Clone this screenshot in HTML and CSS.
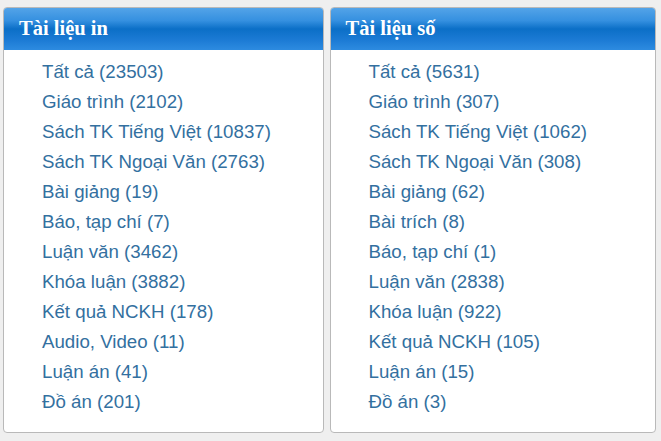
FILE: index.html
```html
<!DOCTYPE html>
<html>
<head>
<meta charset="utf-8">
<link rel="stylesheet" href="styles.css">
</head>
<body>
<div class="wrap">
  <div class="panel left">
    <div class="head">Tài liệu in</div>
    <ul class="list">
      <li><a href="#">Tất cả (23503)</a></li>
      <li><a href="#">Giáo trình (2102)</a></li>
      <li><a href="#">Sách TK Tiếng Việt (10837)</a></li>
      <li><a href="#">Sách TK Ngoại Văn (2763)</a></li>
      <li><a href="#">Bài giảng (19)</a></li>
      <li><a href="#">Báo, tạp chí (7)</a></li>
      <li><a href="#">Luận văn (3462)</a></li>
      <li><a href="#">Khóa luận (3882)</a></li>
      <li><a href="#">Kết quả NCKH (178)</a></li>
      <li><a href="#">Audio, Video (11)</a></li>
      <li><a href="#">Luận án (41)</a></li>
      <li><a href="#">Đồ án (201)</a></li>
    </ul>
  </div>
  <div class="panel right">
    <div class="head">Tài liệu số</div>
    <ul class="list">
      <li><a href="#">Tất cả (5631)</a></li>
      <li><a href="#">Giáo trình (307)</a></li>
      <li><a href="#">Sách TK Tiếng Việt (1062)</a></li>
      <li><a href="#">Sách TK Ngoại Văn (308)</a></li>
      <li><a href="#">Bài giảng (62)</a></li>
      <li><a href="#">Bài trích (8)</a></li>
      <li><a href="#">Báo, tạp chí (1)</a></li>
      <li><a href="#">Luận văn (2838)</a></li>
      <li><a href="#">Khóa luận (922)</a></li>
      <li><a href="#">Kết quả NCKH (105)</a></li>
      <li><a href="#">Luận án (15)</a></li>
      <li><a href="#">Đồ án (3)</a></li>
    </ul>
  </div>
</div>
</body>
</html>
```
FILE: styles.css
```css
html, body {
  margin: 0;
  padding: 0;
  background: #efefef;
}
.wrap {
  display: flex;
  gap: 6px;
  padding: 7px 5px 0 3px;
}
.panel {
  background: #fff;
  border: 1px solid #b9b9b9;
  border-radius: 4px;
  height: 424px;
  overflow: hidden;
  box-sizing: content-box;
}
.left { width: 319px; }
.right { width: 325px; }
.head {
  height: 42px;
  line-height: 40px;
  padding-left: 15px;
  font-family: "Liberation Serif", serif;
  font-weight: bold;
  font-size: 20.5px;
  color: #fff;
  background: linear-gradient(#53a3e8 0%, #3590e0 30%, #0b6fc7 50%, #1b7ad4 75%, #2d8be0 100%);
}
.list {
  list-style: none;
  margin: 0;
  padding: 7px 0 0 38px;
}
.list li {
  height: 30px;
  line-height: 30px;
}
.list a {
  font-family: "Liberation Sans", Arial, sans-serif;
  font-size: 18.7px;
  color: #33709f;
  text-decoration: none;
}
```
